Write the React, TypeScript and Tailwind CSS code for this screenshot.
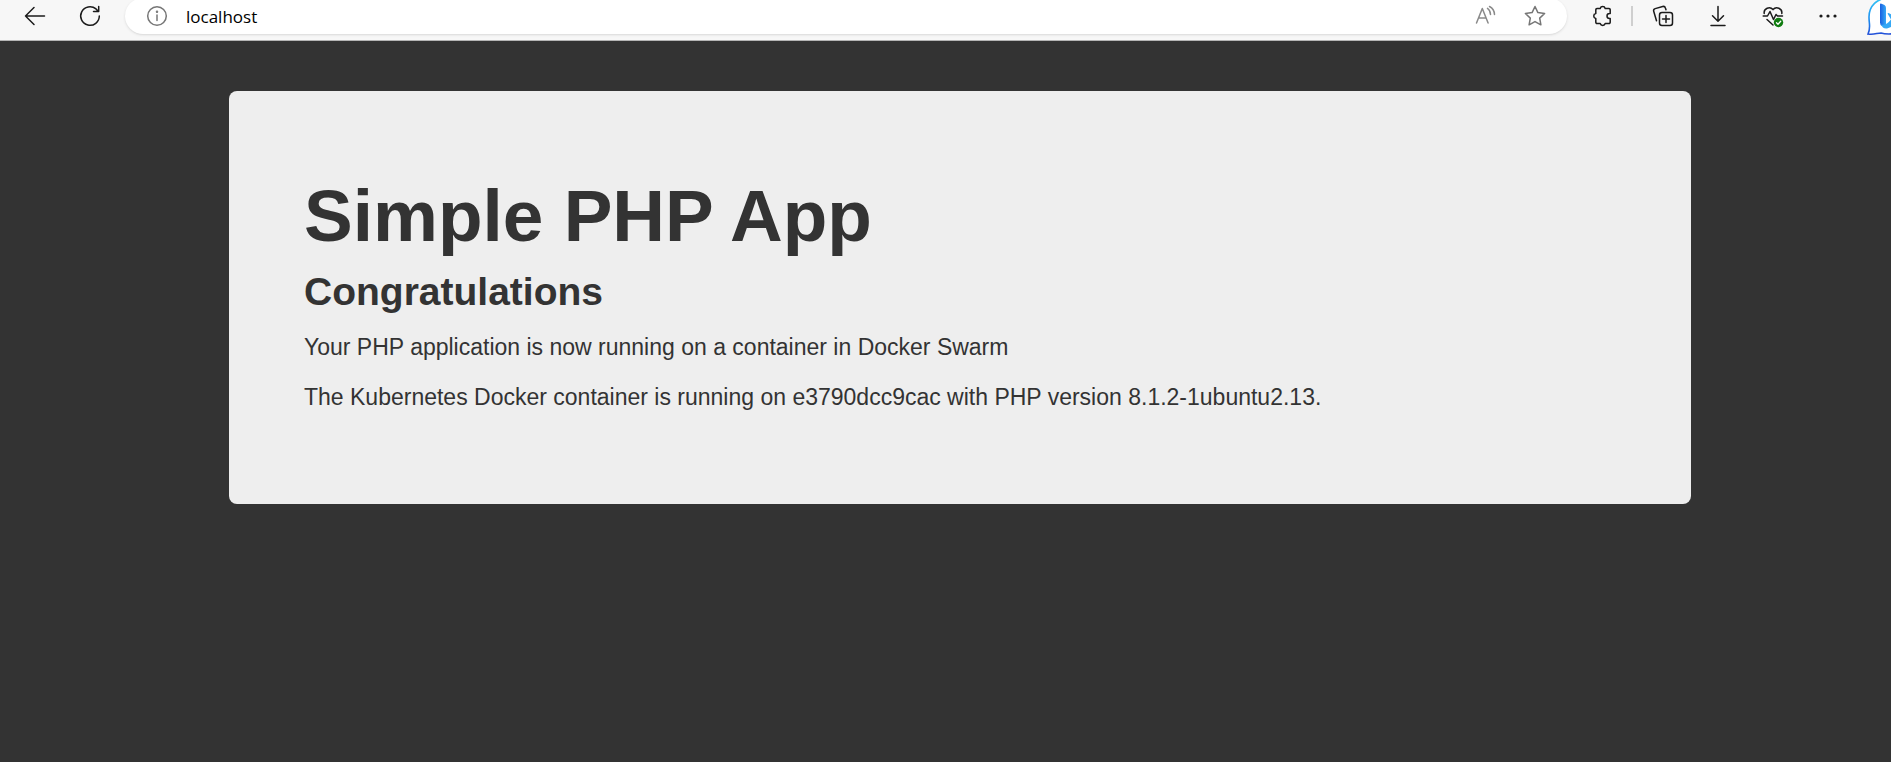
import type { ReactNode } from "react";

function ToolButton({ label, className, children }: { label: string; className: string; children: ReactNode }) {
  return (
    <button type="button" aria-label={label} className={`flex h-8 shrink-0 items-center justify-center ${className}`}>
      {children}
    </button>
  );
}

function Icon({ children, className = "text-[#1b1b1b]" }: { children: ReactNode; className?: string }) {
  return (
    <svg
      viewBox="0 0 24 24"
      width="24"
      height="24"
      fill="none"
      stroke="currentColor"
      strokeWidth="1.5"
      strokeLinecap="round"
      strokeLinejoin="round"
      className={`shrink-0 ${className}`}
      aria-hidden="true"
    >
      {children}
    </svg>
  );
}

function BingLogo() {
  return (
    <svg viewBox="0 0 44 40" width="44" height="40" className="shrink-0" aria-hidden="true">
      <defs>
        <linearGradient id="bubble" x1="0" y1="0" x2="0" y2="1">
          <stop offset="0" stopColor="#35c5f4" />
          <stop offset="0.6" stopColor="#1b8df0" />
          <stop offset="1" stopColor="#2350d8" />
        </linearGradient>
        <linearGradient id="stem" x1="0" y1="0" x2="1" y2="0">
          <stop offset="0" stopColor="#1a5fe0" />
          <stop offset="1" stopColor="#36a9f7" />
        </linearGradient>
      </defs>
      <path
        d="M22 -2C10 -2 2 6 2 17C2 24 4 28 1 34C7 35 10 33 14 33C17 34 19 34 22 34C33 34 41 27 41 16C41 6 33 -2 22 -2Z"
        fill="#fff"
        stroke="url(#bubble)"
        strokeWidth="1.6"
      />
      <path d="M13 4.5Q13 3.200 14.500 3.800L17.500 5Q19 6 19 8V26H15Q13 25 13 22.500Z" fill="url(#stem)" />
      <path d="M14 24.500Q19 26 24 19.500L20.500 13.500Q20.800 12.800 22 13.300L28 16C32 19 31 24 28 25.500L20 28.500C17 29 15 27 14 24.500Z" fill="#35a8f5" />
    </svg>
  );
}

function BrowserBar() {
  return (
    <header className="flex h-[41px] items-start overflow-hidden border-b border-[#b5b5b5] bg-[#f7f7f7]">
      <ToolButton label="Back" className="ml-[7px] w-[55px]">
        <Icon>
          <path d="M21.500 12H2.500M11 3.500L2.500 12L11 20.500" />
        </Icon>
      </ToolButton>
      <ToolButton label="Refresh" className="w-[55px]">
        <Icon>
          <path d="M21.300 12A9.300 9.300 0 1 1 18 4.900L20.500 7.500M20.700 2.500V7.600H15.500" />
        </Icon>
      </ToolButton>
      <div className="-mt-0.5 ml-2 flex h-9 min-w-0 flex-1 items-center rounded-full bg-white shadow-sm">
        <button type="button" aria-label="View site information" className="ml-5 shrink-0">
          <Icon className="text-[#767676]">
            <circle cx="12" cy="12" r="9.300" />
            <path d="M12 11V16.500" />
            <circle cx="12" cy="7.800" r="0.500" fill="currentColor" />
          </Icon>
        </button>
        <input
          type="text"
          aria-label="Address"
          defaultValue="localhost"
          className="ml-[17px] h-8 min-w-0 flex-1 bg-transparent font-['Open_Sans',sans-serif] text-[17px] text-black outline-none"
        />
        <ToolButton label="Read aloud" className="w-[50px]">
          <Icon className="text-[#8a8a8a]">
            <path d="M3.500 19L9.300 4.500L15.100 19M5.600 14H13M14.500 4.300Q17.300 6 17.500 10.500M16.500 2.500Q21.300 5 21.500 10.500" />
          </Icon>
        </ToolButton>
        <ToolButton label="Add to favorites" className="mr-[7px] w-[50px]">
          <Icon className="text-[#767676]">
            <path d="M12 2.500L14.900 8.600L21.600 9.500L16.700 14.100L17.900 20.800L12 17.600L6.100 20.800L7.300 14.100L2.400 9.500L9.100 8.600Z" />
          </Icon>
        </ToolButton>
      </div>
      <ToolButton label="Extensions" className="ml-[7px] w-[55px]">
        <Icon>
          <path d="M7 4.500H10.200A2.600 2.600 0 0 1 15.200 4.500H19A1.200 1.200 0 0 1 20.200 5.700V9.500H19.500A2.500 2.500 0 0 0 19.500 14.500H20.200V18.300A1.200 1.200 0 0 1 19 19.500H15.200A2.600 2.600 0 0 1 10.200 19.500H7A1.200 1.200 0 0 1 5.800 18.300V14.500A2.550 2.550 0 0 1 5.800 9.500V5.700A1.200 1.200 0 0 1 7 4.500Z" />
        </Icon>
      </ToolButton>
      <div className="mt-1.5 mr-[2px] ml-[2px] h-5 w-0.5 shrink-0 bg-[#cfcfcf]" />
      <ToolButton label="Collections" className="w-[55px]">
        <Icon>
          <rect x="8.500" y="8.500" width="13" height="13" rx="2.500" />
          <path d="M15 11.500V18.500M11.500 15H18.500M5.500 16.800L2.700 7.300A2.200 2.200 0 0 1 4.200 4.600L11.700 2.500A2.200 2.200 0 0 1 14.400 4L15 5.800" />
        </Icon>
      </ToolButton>
      <ToolButton label="Downloads" className="w-[55px]">
        <Icon>
          <path d="M12 2.500V17M6.500 11.800L12 17.300L17.500 11.800M5 21.500H19" />
        </Icon>
      </ToolButton>
      <ToolButton label="Browser essentials" className="w-[55px]">
        <Icon>
          <path d="M3.200 9.500A5 5 0 0 1 12 5.600A5 5 0 0 1 20.800 9.500M2.200 12H6.500L9 7.500L12.500 15.500L15 10.500L16.500 12H21.500M6 15.500L12 21" />
          <circle cx="17.500" cy="18.500" r="4.700" fill="#107c10" stroke="none" />
          <path d="M15.500 18.700L17 20.200L19.700 17.300" stroke="#fff" strokeWidth="1.300" />
        </Icon>
      </ToolButton>
      <ToolButton label="Settings and more" className="w-[55px]">
        <Icon>
          <g fill="currentColor" stroke="none">
            <circle cx="5" cy="12" r="1.600" />
            <circle cx="12" cy="12" r="1.600" />
            <circle cx="19" cy="12" r="1.600" />
          </g>
        </Icon>
      </ToolButton>
      <div className="w-[36px] shrink-0 pl-3">
        <button type="button" aria-label="Discover" className="flex">
          <BingLogo />
        </button>
      </div>
    </header>
  );
}

export default function App() {
  return (
    <div className="flex min-h-screen flex-col bg-[#333333] font-['Liberation_Sans',Arial,sans-serif] text-[#333333]">
      <BrowserBar />
      <main className="pt-[50px] pr-[200px] pb-[50px] pl-[229px]">
        <section className="rounded-lg bg-[#eeeeee] p-[75px]">
          <h1 className="text-[73px] leading-[100px] font-bold">Simple PHP App</h1>
          <h2 className="text-[39px] leading-[51px] font-bold">Congratulations</h2>
          <p className="mt-3 mb-[13px] text-[23px] leading-[37px]">
            Your PHP application is now running on a container in Docker Swarm
          </p>
          <p className="mb-[13px] text-[23px] leading-[37px]">
            The Kubernetes Docker container is running on e3790dcc9cac with PHP version 8.1.2-1ubuntu2.13.
          </p>
        </section>
      </main>
    </div>
  );
}
